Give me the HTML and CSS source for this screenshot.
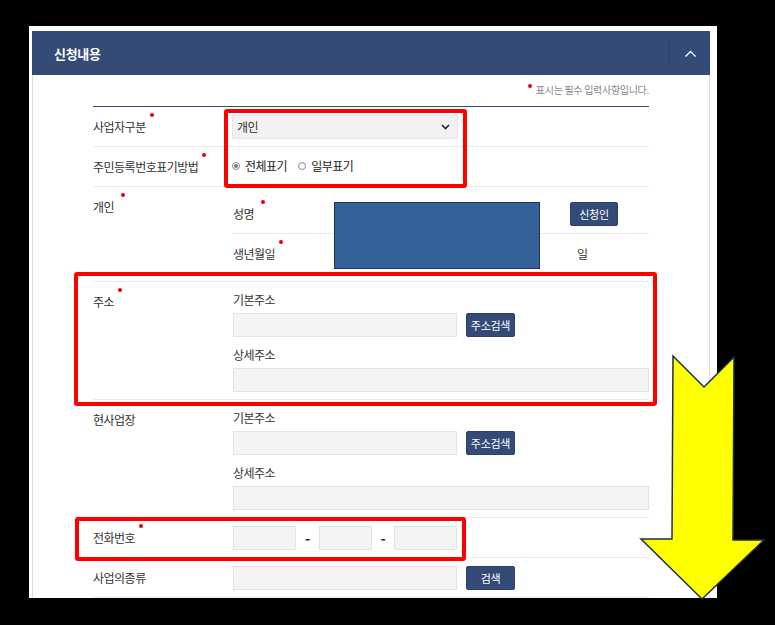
FILE: index.html
```html
<!DOCTYPE html>
<html>
  <head>
    <link rel="stylesheet" href="styles.css">
  </head>
  <body>
    <div class="page">
      <div class="panel">
        <div class="panel-head">
          <h2 class="panel-title">신청내용</h2>
          <div class="panel-toggle">
            <svg width="11" height="7" viewBox="0 0 11 7"><polyline points="0.5,6.5 5.5,1.5 10.5,6.5" fill="none" stroke="#ffffff" stroke-width="1.4"/></svg>
          </div>
        </div>
        <div class="panel-body">
          <p class="note"><span class="req-dot"></span>표시는 필수 입력사항입니다.</p>
          <div class="form-table">
            <div class="form-row">
              <div class="form-label"><span class="req">사업자구분</span></div>
              <div class="form-field">
                <div class="select">
                  <span>개인</span>
                  <svg width="9" height="6" viewBox="0 0 9 6"><polyline points="1,1 4.5,4.5 8,1" fill="none" stroke="#222" stroke-width="1.6"/></svg>
                </div>
              </div>
            </div>
            <div class="form-row">
              <div class="form-label"><span class="req">주민등록번호표기방법</span></div>
              <div class="form-field radios">
                <label class="radio-item"><span class="radio checked"></span>전체표기</label>
                <label class="radio-item"><span class="radio"></span>일부표기</label>
              </div>
            </div>
            <div class="form-row top">
              <div class="form-label"><span class="req wide">개인</span></div>
              <div class="form-field sub-table">
                <div class="sub-row">
                  <div class="sub-label"><span class="req wide">성명</span></div>
                  <div class="sub-space"></div>
                  <button class="btn">신청인</button>
                </div>
                <div class="sub-row">
                  <div class="sub-label"><span class="req">생년월일</span></div>
                  <div class="sub-space long"></div>
                  <span class="unit">일</span>
                </div>
              </div>
            </div>
            <div class="form-row top">
              <div class="form-label"><span class="req">주소</span></div>
              <div class="form-field address">
                <div class="addr-label">기본주소</div>
                <div class="addr-line">
                  <div class="input"></div>
                  <button class="btn">주소검색</button>
                </div>
                <div class="addr-label second">상세주소</div>
                <div class="input full"></div>
              </div>
            </div>
            <div class="form-row top">
              <div class="form-label">현사업장</div>
              <div class="form-field address">
                <div class="addr-label">기본주소</div>
                <div class="addr-line">
                  <div class="input"></div>
                  <button class="btn">주소검색</button>
                </div>
                <div class="addr-label second">상세주소</div>
                <div class="input full"></div>
              </div>
            </div>
            <div class="form-row">
              <div class="form-label"><span class="req">전화번호</span></div>
              <div class="form-field phone">
                <div class="input tel-a"></div>
                <span class="dash">-</span>
                <div class="input tel-b"></div>
                <span class="dash">-</span>
                <div class="input tel-a"></div>
              </div>
            </div>
            <div class="form-row">
              <div class="form-label">사업의종류</div>
              <div class="form-field addr-line">
                <div class="input"></div>
                <button class="btn">검색</button>
              </div>
            </div>
          </div>
        </div>
      </div>

      <!-- markup drawn over the screenshot -->
      <div class="redact"></div>
      <div class="mark mark-1"></div>
      <div class="mark mark-2"></div>
      <div class="mark mark-3"></div>
      <svg class="arrow" width="130" height="250" viewBox="0 0 130 250">
        <polygon points="35,4 66,35 96,5 95,188 126,188 64,247 3,187 34,187" fill="#ffff00" stroke="#1f2d45" stroke-width="1.5" stroke-linejoin="miter"/>
      </svg>
    </div>
  </body>
</html>
```

FILE: styles.css
```css
* {
  box-sizing: border-box;
}
body {
  margin: 0;
  background: #000;
  font-family: "Noto Sans CJK KR", "Noto Sans", sans-serif;
  color: #333;
  font-size: 12px;
  letter-spacing: -0.5px;
}
.page {
  position: relative;
  width: 775px;
  height: 625px;
  overflow: hidden;
  padding: 26px 0 0 29px;
}
.panel {
  width: 688px;
  height: 572px;
  background: #fff;
  padding: 5px 7px 0 3px;
  overflow: hidden;
}
.panel-head {
  height: 44px;
  background: #344b78;
  display: flex;
  align-items: center;
  justify-content: space-between;
}
.panel-title {
  margin: 0;
  padding-left: 22px;
  color: #fff;
  font-size: 13px;
  font-weight: bold;
  letter-spacing: -0.3px;
}
.panel-toggle {
  width: 41px;
  height: 28px;
  border-left: 1px solid #2c406a;
  display: flex;
  align-items: center;
  justify-content: center;
}
.panel-body {
  border-left: 1px solid #dcdcdc;
  border-right: 1px solid #dcdcdc;
  padding: 8px 60px 0 60px;
  height: 528px;
}
.note {
  margin: 0 0 9px;
  text-align: right;
  font-size: 10px;
  letter-spacing: -0.3px;
  line-height: 14px;
  color: #888;
}
.req-dot {
  display: inline-block;
  width: 4px;
  height: 4px;
  border-radius: 50%;
  background: #e60012;
  vertical-align: top;
  margin: 1px 4px 0 0;
}
.form-table {
  border-top: 1px solid #344b78;
}
.form-row {
  display: grid;
  grid-template-columns: 139px 1fr;
  align-items: center;
  min-height: 40px;
  border-bottom: 1px solid #ebebeb;
}
.form-row.top {
  align-items: start;
}
.form-label {
  line-height: 14px;
}
.form-row.top .form-label {
  padding-top: 13px;
}
.req {
  position: relative;
}
.req::after {
  content: "";
  position: absolute;
  right: -8px;
  top: -5px;
  width: 4px;
  height: 4px;
  border-radius: 50%;
  background: #e60012;
}
.req.wide::after {
  right: -11px;
}
.form-field {
  line-height: 14px;
}
.select {
  width: 226px;
  height: 24px;
  background: #f2f2f2;
  border: 1px solid #e6e6e6;
  display: flex;
  align-items: center;
  justify-content: space-between;
  padding: 0 7px 0 4px;
}
.radios {
  display: flex;
  align-items: center;
  gap: 11px;
  color: #222;
  padding-bottom: 2px;
}
.radio-item {
  display: flex;
  align-items: center;
  gap: 5px;
}
.radio {
  width: 8px;
  height: 8px;
  border: 1px solid #8a8a8a;
  border-radius: 50%;
  display: flex;
  align-items: center;
  justify-content: center;
}
.radio.checked::after {
  content: "";
  width: 4px;
  height: 4px;
  border-radius: 50%;
  background: #777;
}
.sub-table {
  padding: 8px 0;
}
.sub-row {
  display: flex;
  align-items: center;
  height: 39px;
  padding-left: 1px;
}
.sub-row:first-child {
  border-bottom: 1px solid #ebebeb;
}
.sub-label {
  width: 100px;
}
.sub-space {
  width: 237px;
}
.sub-space.long {
  width: 244px;
}
.btn {
  height: 24px;
  width: 49px;
  padding: 0;
  background: #344b78;
  border: 1px solid #2b3f68;
  border-radius: 2px;
  color: #fff;
  font-family: "Noto Sans CJK KR", "Noto Sans", sans-serif;
  font-size: 11px;
  letter-spacing: -0.3px;
}
.sub-row .btn {
  width: 48px;
}
.address {
  padding: 11px 0 7px 1px;
}
.addr-label {
  line-height: 14px;
  margin-bottom: 6px;
}
.addr-label.second {
  margin-top: 11px;
}
.addr-line {
  display: flex;
  align-items: center;
  gap: 9px;
}
.form-row > .addr-line {
  padding-left: 1px;
}
.input {
  width: 224px;
  height: 24px;
  background: #f4f4f4;
  border: 1px solid #e3e3e3;
}
.input.full {
  width: 416px;
}
.phone {
  display: flex;
  align-items: center;
  padding-left: 1px;
}
.input.tel-a {
  width: 63px;
}
.input.tel-b {
  width: 53px;
}
.dash {
  width: 22.5px;
  text-align: center;
  font-size: 14px;
  font-weight: bold;
  color: #222;
}
.redact {
  position: absolute;
  left: 334px;
  top: 202px;
  width: 206px;
  height: 67px;
  background: #336199;
  border: 1px solid #1c3556;
}
.mark {
  position: absolute;
  border: 4px solid #ff0000;
  border-radius: 3px;
}
.mark-1 {
  left: 224px;
  top: 109px;
  width: 243px;
  height: 79px;
}
.mark-2 {
  left: 74px;
  top: 272px;
  width: 583px;
  height: 134px;
}
.mark-3 {
  left: 75px;
  top: 517px;
  width: 391px;
  height: 44px;
}
.arrow {
  position: absolute;
  left: 638px;
  top: 352px;
}
```
